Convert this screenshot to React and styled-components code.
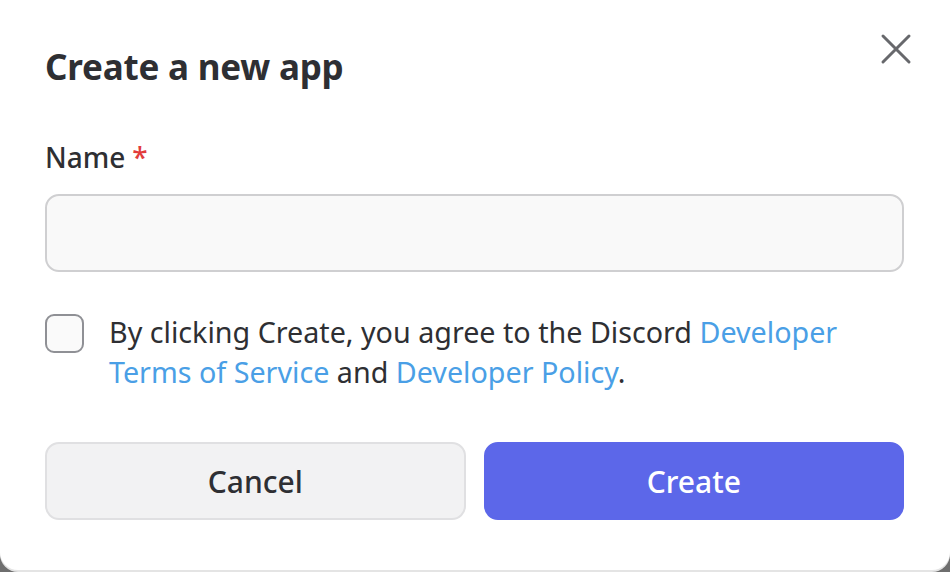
import React from "react";
import styled, { createGlobalStyle } from "styled-components";

const Global = createGlobalStyle`
  html, body { margin: 0; padding: 0; }
  body {
    background: #6e6e6e;
    width: 950px;
    height: 572px;
    overflow: hidden;
    font-family: "Noto Sans", "Open Sans", sans-serif;
  }
`;

const Modal = styled.div`
  position: relative;
  box-sizing: border-box;
  width: 950px;
  height: 570px;
  background: #ffffff;
  border-radius: 0 0 18px 18px;
  padding: 43px 46px 0 45px;
  display: flex;
  flex-direction: column;
  box-shadow: 0 2px 0 #e4e4e4;
`;

const Title = styled.h1`
  margin: 0;
  font-size: 35px;
  font-weight: 700;
  color: #2e2f33;
  line-height: 48px;
  letter-spacing: -0.2px;
`;

const CloseButton = styled.button`
  position: absolute;
  top: 33px;
  right: 38px;
  width: 32px;
  height: 32px;
  padding: 0;
  border: none;
  background: transparent;
  display: flex;
  align-items: center;
  justify-content: center;
`;

const Label = styled.label`
  margin-top: 48px;
  font-size: 28px;
  font-weight: 500;
  color: #2e2f33;
  line-height: 36px;
`;

const Required = styled.span`
  color: #e23c3c;
  margin-left: 7px;
`;

const Input = styled.input`
  margin-top: 19px;
  box-sizing: border-box;
  width: 100%;
  height: 78px;
  border: 2px solid #cfcfd1;
  border-radius: 14px;
  background: #f9f9f9;
  outline: none;
`;

const AgreeRow = styled.div`
  margin-top: 41px;
  display: flex;
  align-items: flex-start;
  gap: 25px;
`;

const Checkbox = styled.span`
  flex: none;
  box-sizing: border-box;
  width: 39px;
  height: 39px;
  margin-top: 1px;
  border: 2px solid #8f9095;
  border-radius: 9px;
  background: #fafafa;
`;

const AgreeText = styled.p`
  margin: 0;
  margin-top: -1px;
  font-size: 28.7px;
  line-height: 40px;
  color: #2e2f33;
`;

const TextLine = styled.span`
  display: block;
  white-space: nowrap;
`;

const Link = styled.a`
  color: #4a9fe6;
  text-decoration: none;
`;

const Buttons = styled.div`
  margin-top: 50px;
  display: grid;
  grid-template-columns: 1fr 1fr;
  gap: 18px;
`;

const Button = styled.button`
  box-sizing: border-box;
  height: 78px;
  border-radius: 14px;
  font-family: inherit;
  font-size: 30px;
  font-weight: 500;
  border: 2px solid ${(p) => (p.$primary ? "#5c67e9" : "#e0e0e2")};
  background: ${(p) => (p.$primary ? "#5c67e9" : "#f2f2f3")};
  color: ${(p) => (p.$primary ? "#ffffff" : "#2e2f33")};
`;

export default function App() {
  return (
    <>
      <Global />
      <Modal>
        <Title>Create a new app</Title>
        <CloseButton aria-label="Close">
          <svg width="32" height="32" viewBox="0 0 32 32">
            <path d="M3 3 L29 29 M29 3 L3 29" stroke="#67686c" strokeWidth="3" strokeLinecap="round" />
          </svg>
        </CloseButton>
        <Label>
          Name<Required>*</Required>
        </Label>
        <Input type="text" />
        <AgreeRow>
          <Checkbox />
          <AgreeText>
            <TextLine>
              By clicking Create, you agree to the Discord <Link href="#">Developer</Link>
            </TextLine>
            <TextLine>
              <Link href="#">Terms of Service</Link> and <Link href="#">Developer Policy</Link>.
            </TextLine>
          </AgreeText>
        </AgreeRow>
        <Buttons>
          <Button>Cancel</Button>
          <Button $primary>Create</Button>
        </Buttons>
      </Modal>
    </>
  );
}
